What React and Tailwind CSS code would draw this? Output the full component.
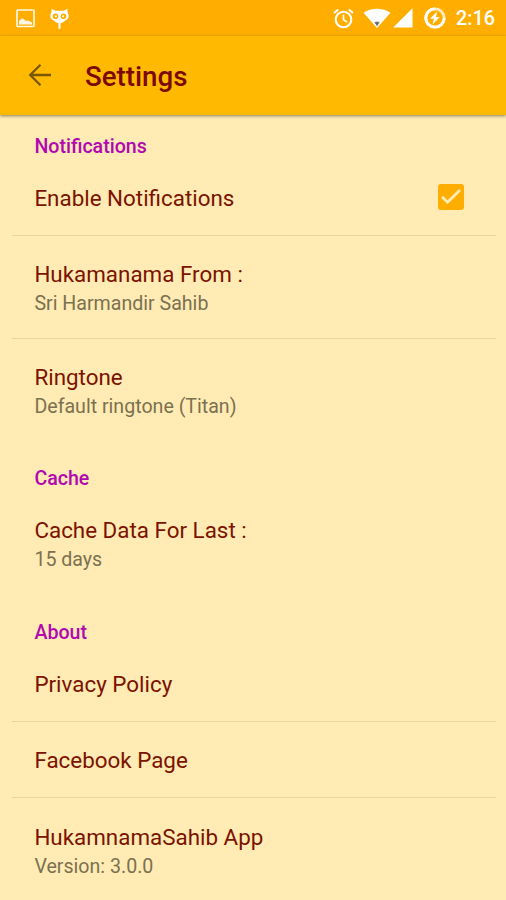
import React from "react";

const SECTIONS = [
    {
        title: "Notifications",
        height: "h-[45px]",
        rows: [
            { title: "Enable Notifications", checked: true },
            { title: "Hukamanama From :", summary: "Sri Harmandir Sahib" },
            { title: "Ringtone", summary: "Default ringtone (Titan)" },
        ],
    },
    {
        title: "Cache",
        height: "h-[50.4px]",
        rows: [{ title: "Cache Data For Last :", summary: "15 days" }],
    },
    {
        title: "About",
        height: "h-[50.6px]",
        rows: [
            { title: "Privacy Policy" },
            { title: "Facebook Page" },
            { title: "HukamnamaSahib App", summary: "Version: 3.0.0", tall: true },
        ],
    },
];

function StatusBar() {
    return (
        <div className="flex h-9 items-center justify-between bg-[#ffae00] pl-[16px] pr-[11px] text-white">
            <div className="flex items-center gap-[14px]">
                {/* Picture */}
                <svg width="19" height="19" viewBox="0 0 19 19" className="opacity-90">
                    <rect x="1" y="1" width="17" height="16.5" rx="0.8" fill="none" stroke="currentColor" strokeWidth="1.7" />
                    <path d="M3 15.5v-3.6l2.6-2.4 1.8.2 2.6 2.2 2-.4 4 2v2z" fill="currentColor" />
                </svg>
                {/* Cid head */}
                <svg width="21" height="23" viewBox="0 0 21 23">
                    <path d="M2.6 1.5 7 4.5 2.6 8zM18.4 1.5 14 4.5l4.4 3.500z" fill="currentColor" />
                    <rect x="1.3" y="3.8" width="18.4" height="10" rx="5" fill="currentColor" />
                    <path d="M5 11h11v2.6q-1.500 2.400-4.500 2.600v5.300q-1 1.200-2 0v-5.300Q6.500 16 5 13.600z" fill="currentColor" />
                    <circle cx="6.5" cy="9.2" r="2.8" fill="#ffae00" />
                    <circle cx="14.5" cy="9.2" r="2.8" fill="#ffae00" />
                    <circle cx="6.9" cy="9.3" r="1.100" fill="currentColor" />
                    <circle cx="14.1" cy="9.3" r="1.100" fill="currentColor" />
                </svg>
            </div>
            <div className="flex items-center">
                {/* Alarm */}
                <svg width="21" height="21" viewBox="0 0 21 21" fill="none" stroke="currentColor" className="mr-[9px]">
                    <circle cx="10.5" cy="11.5" r="7.8" strokeWidth="2.1" />
                    <path d="M10.5 6.8v5l3.5 2.2" strokeWidth="1.7" />
                    <path d="M1 4.9 5.2 1.4M20 4.9l-4.2-3.5" strokeWidth="2" />
                </svg>
                {/* Wifi */}
                <svg width="28" height="21" viewBox="0 0 28 21" className="mr-[2px]">
                    <path d="M.5 4.8C8.5-.5 19.5-.5 27.5 4.8L14 20z" fill="currentColor" />
                    <path d="M11.2 14.3q2.8-1.4 5.6 0L14 18.2z" fill="#9a978c" />
                    <path d="M12.3 15h3.4M14 15v2.3" stroke="#44505a" strokeWidth="0.9" />
                </svg>
                {/* Signal */}
                <svg width="20" height="20" viewBox="0 0 20 20" className="mr-[11px]">
                    <path d="M19.5.3V19.5H.2z" fill="currentColor" />
                </svg>
                {/* Battery */}
                <svg width="22" height="22" viewBox="0 0 22 22" className="mr-[10px]">
                    <circle cx="11" cy="11" r="9.2" fill="none" stroke="currentColor" strokeWidth="2.8" opacity="0.75" />
                    <path d="M11 1.8A9.2 9.2 0 1 0 20.2 11" fill="none" stroke="currentColor" strokeWidth="2.8" />
                    <path d="M13.2 4.6 6 11.8h3.9l-1.4 5.6 7.3-7.4h-3.9z" fill="currentColor" />
                </svg>
                <span className="pt-[2px] text-[19.8px] font-medium leading-[34px]">2:16</span>
            </div>
        </div>
    );
}

function Toolbar() {
    return (
        <header className="relative flex h-[79px] items-center bg-[#ffb900] pl-[28px] shadow-[0_1px_3px_rgba(0,0,0,0.45)]">
            <svg width="24" height="24" viewBox="0 0 24 24" fill="none" stroke="#775700" strokeWidth="2.3" className="-mt-px">
                <path d="M23 12H2.5M12.5 1.8 2.2 12l10.3 10.2" />
            </svg>
            <h1 className="ml-[33px] pt-[3px] text-[27.7px] font-medium leading-9 text-[#7c0900]">Settings</h1>
        </header>
    );
}

function Checkbox() {
    return (
        <div className="flex size-[26px] items-center justify-center rounded-[3px] bg-[#ffae00]">
            <svg width="22" height="20" viewBox="0 0 22 20" fill="none" stroke="#ffebb3" strokeWidth="2.8">
                <path d="m2 9.8 5.5 5.4L20 2.9" />
            </svg>
        </div>
    );
}

function Preference({ row, last }) {
    return (
        <div className={`ml-3 mr-[10px] border-b ${last ? "border-transparent" : "border-[#e9d5a1]"}`}>
            <div className={`flex justify-between pl-[22.4px] pr-[32.5px] ${row.summary ? "h-[102px]" : "h-[75px]"}`}>
                <div className={row.tall ? "pt-[25px]" : "pt-[24px]"}>
                    <div className="text-[22.4px] leading-[29px] text-[#7c1200]">{row.title}</div>
                    {row.summary && (
                        <div className="text-[19.6px] leading-[29px] text-[#7b7150]">{row.summary}</div>
                    )}
                </div>
                {row.checked && (
                    <div className="pt-[24px]">
                        <Checkbox />
                    </div>
                )}
            </div>
        </div>
    );
}

export default function App() {
    return (
        <div className="h-[900px] w-[506px] overflow-hidden bg-[#ffebb3] font-['Roboto',sans-serif]">
            <StatusBar />
            <Toolbar />
            <main>
                {SECTIONS.map((section) => (
                    <section key={section.title}>
                        <h2 className={`flex items-end pl-[34.4px] text-[19.6px] font-medium leading-[26px] text-[#b108b1] ${section.height}`}>
                            {section.title}
                        </h2>
                        {section.rows.map((row, i) => (
                            <Preference key={row.title} row={row} last={i === section.rows.length - 1} />
                        ))}
                    </section>
                ))}
            </main>
        </div>
    );
}
